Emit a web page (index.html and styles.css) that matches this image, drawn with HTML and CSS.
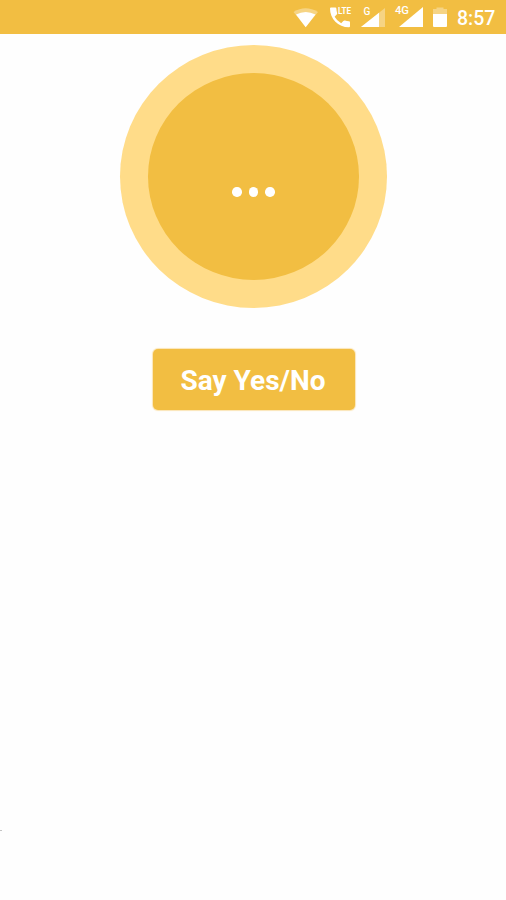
FILE: index.html
```html
<!DOCTYPE html>
<html lang="en">
<head>
<meta charset="utf-8">
<meta name="viewport" content="width=device-width, initial-scale=1">
<title>Say Yes/No</title>
<link rel="stylesheet" href="styles.css">
</head>
<body>
<header class="status-bar">
  <svg class="status-icons" width="160" height="34" viewBox="290 0 160 34" aria-hidden="true">
    <g fill="#fff">
      <path opacity=".35" d="M293.500 12Q305.500 4.500 318 12L305.700 27Z"/>
      <path d="M296 14.500Q305.700 9.500 315.500 14.500L305.700 27.300Z"/>
      <path d="M331 7.500H335.300Q336.300 7.500 336.400 8.700Q336.500 11 337.100 13Q337.300 14 336.700 14.600L334.600 16.700Q337 20.900 341.200 23.200L343.300 21Q344 20.300 345 20.600Q346.800 21.200 349 21.300Q350 21.400 350 22.500V26.300Q350 27.300 349 27.300C338 27.300 330 19 330 8.500Q330 7.500 331 7.500Z"/>
      <path opacity=".35" d="M385 8V27H361Z"/>
      <path d="M379 12.750V27H361Z"/>
      <path d="M423 7V27H399Z"/>
      <path opacity=".35" d="M436.500 9V7.500H443.500V9H447V14H433V9Z"/>
      <path d="M433 14H447V26Q447 27 446 27H434Q433 27 433 26Z"/>
    </g>
    <g class="network">
      <text class="lte" x="338" y="14" textLength="13" lengthAdjust="spacingAndGlyphs">LTE</text>
      <text x="363.500" y="14.500">G</text>
      <text x="395" y="14" textLength="14" lengthAdjust="spacingAndGlyphs">4G</text>
    </g>
  </svg>
  <time class="clock">8:57</time>
</header>
<main class="screen">
  <div class="listener">
    <div class="listener-core">
      <div class="dots"><span class="dot"></span><span class="dot"></span><span class="dot"></span></div>
    </div>
  </div>
  <button class="answer" type="button">Say Yes/No</button>
</main>
<div class="edge-mark"></div>
</body>
</html>
```
FILE: styles.css
```css
* { box-sizing: border-box; }
body {
  margin: 0;
  height: 900px;
  overflow: hidden;
  background: #fefefe;
  font-family: Roboto, sans-serif;
}
.status-bar {
  display: flex;
  justify-content: flex-end;
  align-items: center;
  height: 34px;
  padding-right: 10px;
  background: #f2be42;
}
.status-icons { flex: none; margin-right: 7px; }
.network { fill: #fff; font-size: 10px; font-weight: 500; }
.lte { font-size: 8.500px; font-weight: 700; }
.clock {
  width: 39px;
  color: #fff;
  font-size: 19.500px;
  line-height: 34px;
  font-weight: 500;
  padding-top: 3px;
  white-space: nowrap;
}
.screen {
  display: flex;
  flex-direction: column;
  align-items: center;
  padding: 11px 0 0 1px;
}
.listener {
  width: 267px;
  height: 263px;
  padding: 28px;
  border-radius: 50%;
  background: #ffdc89;
}
.listener-core {
  display: flex;
  justify-content: center;
  height: 100%;
  padding-top: 114px;
  border-radius: 50%;
  background: #f2be42;
}
.dots { display: flex; gap: 7px; height: 9.500px; }
.dot { width: 9.500px; height: 9.500px; border-radius: 50%; background: #fff; }
.answer {
  width: 202px;
  height: 61px;
  margin-top: 41px;
  padding: 2px 1px 0 0;
  border: 0;
  border-radius: 5px;
  background: #f2be42;
  box-shadow: 0 0 1px 1px #fbe5b6;
  color: #fff;
  font: 700 28px/59px Roboto, sans-serif;
  white-space: nowrap;
}
.edge-mark {
  width: 2px;
  height: 1px;
  margin-top: 420px;
  background: #c4c4c4;
}
```
